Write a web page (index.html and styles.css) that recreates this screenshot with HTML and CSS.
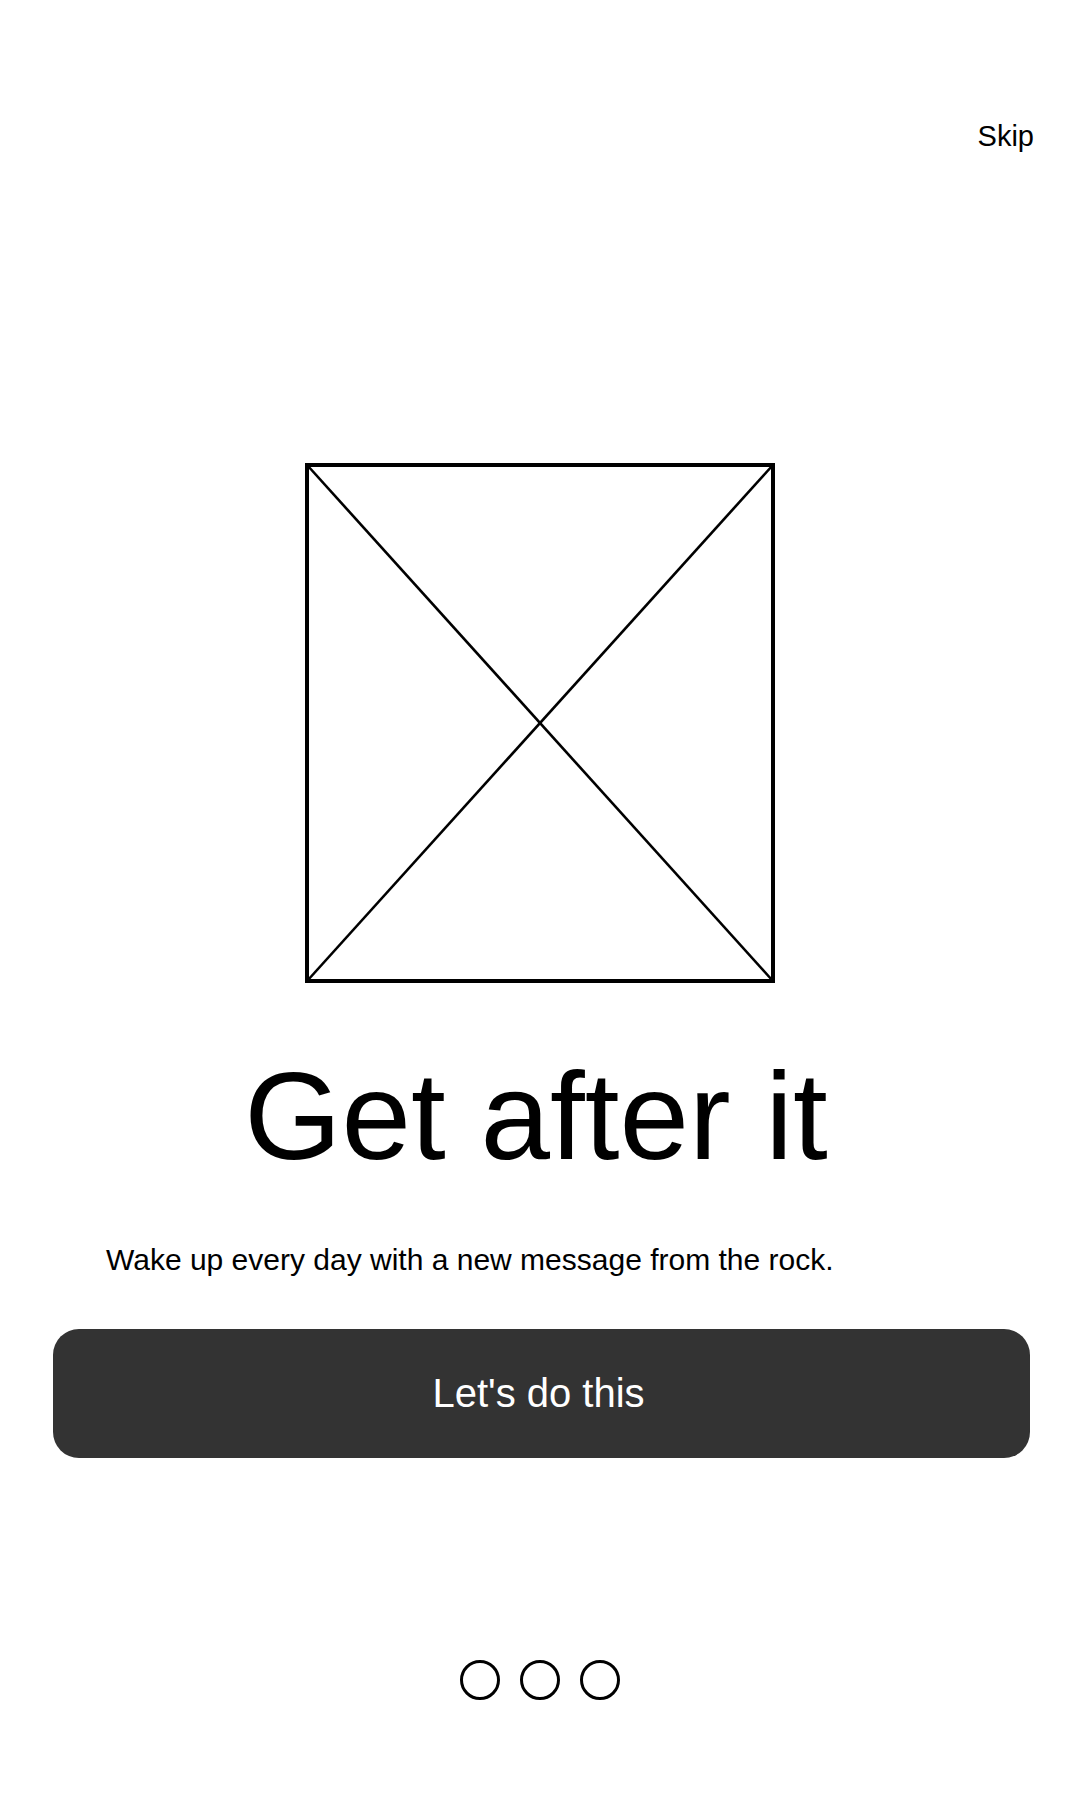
FILE: index.html
```html
<!DOCTYPE html>
<html lang="en">
<head>
<meta charset="utf-8">
<title>Onboarding</title>
<link rel="stylesheet" href="styles.css">
</head>
<body>
<div class="screen">
  <header class="topbar">
    <a class="skip" href="#">Skip</a>
  </header>
  <div class="hero">
    <svg class="placeholder" width="470" height="520" viewBox="0 0 470 520" aria-hidden="true">
      <rect x="2" y="2" width="466" height="516" fill="none" stroke="#000" stroke-width="4"/>
      <line x1="3" y1="3" x2="467" y2="517" stroke="#000" stroke-width="2.6"/>
      <line x1="467" y1="3" x2="3" y2="517" stroke="#000" stroke-width="2.6"/>
    </svg>
  </div>
  <h1 class="title">Get after it</h1>
  <p class="subtitle">Wake up every day with a new message from the rock.</p>
  <button class="cta" type="button">Let's do this</button>
  <div class="dots">
    <span class="dot"></span>
    <span class="dot"></span>
    <span class="dot"></span>
  </div>
</div>
</body>
</html>
```

FILE: styles.css
```css
html, body {
  margin: 0;
  padding: 0;
  background: #ffffff;
}

body {
  font-family: "Liberation Sans", Arial, sans-serif;
  color: #000000;
}

.screen {
  width: 1080px;
  height: 1800px;
  display: flex;
  flex-direction: column;
}

.topbar {
  display: flex;
  justify-content: flex-end;
  padding: 122px 46px 0 0;
}

.skip {
  font-size: 29px;
  line-height: 28px;
  color: #000;
  text-decoration: none;
}

.hero {
  display: flex;
  justify-content: center;
  margin-top: 313px;
}

.placeholder {
  display: block;
}

.title {
  margin: 70px 0 0;
  padding-right: 8px;
  font-size: 125px;
  line-height: 125px;
  font-weight: 400;
  text-align: center;
}

.subtitle {
  margin: 67px 0 0;
  padding-left: 106px;
  font-size: 30px;
  line-height: 30px;
}

.cta {
  margin: 54px 50px 0 53px;
  padding: 0 6px 0 0;
  height: 129px;
  border: none;
  border-radius: 26px;
  background: #333333;
  color: #ffffff;
  font-family: "Liberation Sans", Arial, sans-serif;
  font-size: 40px;
}

.dots {
  display: flex;
  justify-content: center;
  gap: 20px;
  margin-top: 202px;
}

.dot {
  width: 34px;
  height: 34px;
  border: 3px solid #000;
  border-radius: 50%;
}
```
